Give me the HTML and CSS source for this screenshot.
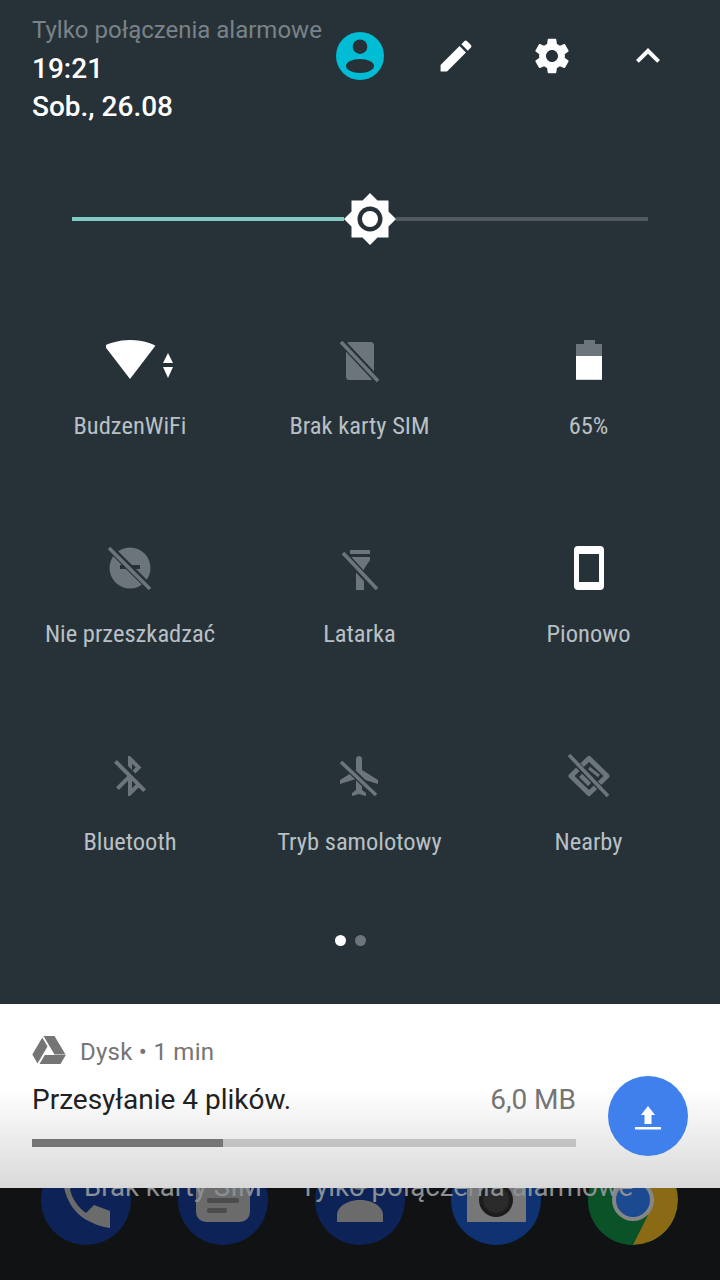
FILE: index.html
```html
<!DOCTYPE html>
<html lang="pl">
<head>
<meta charset="utf-8">
<title>Szybkie ustawienia</title>
<link rel="stylesheet" href="styles.css">
</head>
<body>
<div class="screen">
  <section class="shade">
    <header class="head">
      <div class="status">
        <div class="carrier">Tylko połączenia alarmowe</div>
        <div class="clock">19:21</div>
        <div class="date">Sob., 26.08</div>
      </div>
      <div class="actions">
        <svg class="act" viewBox="0 0 48 48"><circle cx="24" cy="24" r="24" fill="#00bcd4"/><circle cx="24" cy="14.700" r="7.300" fill="#263238"/><ellipse cx="24" cy="34" rx="14" ry="7" fill="#263238"/></svg>
        <svg class="act" viewBox="-2 -2 28 28"><path fill="#fff" d="M3 17.250V21h3.750L17.810 9.940l-3.750-3.750L3 17.250zM20.710 7.040a1 1 0 0 0 0-1.410l-2.340-2.340a1 1 0 0 0-1.410 0l-1.830 1.830 3.750 3.750 1.830-1.830z"/></svg>
        <svg class="act" viewBox="-2 -2 28 28"><path fill="#fff" d="M19.430 12.980c.04-.32.070-.64.070-.98s-.03-.66-.07-.98l2.110-1.650c.19-.15.240-.42.120-.64l-2-3.460c-.12-.22-.39-.3-.61-.22l-2.490 1c-.52-.4-1.080-.73-1.690-.98l-.38-2.650A.488.488 0 0 0 14 2h-4c-.25 0-.46.18-.49.42l-.38 2.650c-.61.25-1.170.59-1.690.98l-2.490-1c-.23-.09-.49 0-.61.22l-2 3.460c-.13.220-.07.490.12.640l2.110 1.650c-.04.320-.07.650-.07.980s.03.660.07.980l-2.110 1.650c-.19.150-.24.420-.12.640l2 3.460c.12.220.39.300.61.220l2.490-1c.52.400 1.080.730 1.690.980l.38 2.650c.03.240.24.420.49.420h4c.25 0 .46-.18.49-.42l.38-2.650c.61-.25 1.170-.59 1.690-.98l2.490 1c.23.090.49 0 .61-.22l2-3.460c.12-.22.07-.49-.12-.64l-2.110-1.650zM12 15.500c-1.930 0-3.500-1.570-3.500-3.500s1.570-3.500 3.500-3.500 3.500 1.570 3.500 3.500-1.570 3.500-3.500 3.500z"/></svg>
        <svg class="act" viewBox="0 0 24 24"><path fill="#fff" d="M12 8l-6 6 1.410 1.410L12 10.830l4.590 4.580L18 14z"/></svg>
      </div>
    </header>

    <div class="slider">
      <div class="slider-on"></div>
      <svg class="thumb" viewBox="0 0 52 52"><path fill="#fff" d="M26 0l7.500 7.500H44.500V18.500L52 26l-7.500 7.500V44.500H33.500L26 52l-7.500-7.500H7.500V33.500L0 26l7.500-7.500V7.500H18.500z"/><circle cx="26" cy="26" r="12.500" fill="#263238"/><circle cx="26" cy="26" r="8" fill="#fff"/></svg>
      <div class="slider-off"></div>
    </div>

    <div class="tiles">
      <div class="tile">
        <div class="glyph">
          <svg class="ic wide" viewBox="0 0 72 48"><path fill="#fff" d="M11 43L-14.400 9.800C-13.400 9 -3 4 11 4S35.400 9 36.400 9.800z" transform="translate(13 0)"/><path fill="#fff" d="M62 17l5 10H57zM57 31h10l-5 11z"/></svg>
        </div>
        <div class="label">BudzenWiFi</div>
      </div>
      <div class="tile">
        <div class="glyph">
          <svg class="ic" viewBox="0 0 48 48"><rect x="10" y="6" width="28" height="38" rx="3.500" fill="#6c757b"/><path d="M2 2L44 47" stroke="#263238" stroke-width="7" fill="none"/><path d="M5 6L42 45" stroke="#6c757b" stroke-width="3.600" fill="none"/></svg>
        </div>
        <div class="label">Brak karty SIM</div>
      </div>
      <div class="tile">
        <div class="glyph">
          <svg class="ic" viewBox="0 0 48 48"><path fill="#6c757b" d="M19 4h11v4h7v12H11V8h8z"/><path fill="#fff" d="M11 20h26v23H11z"/><path fill="#d5d8da" d="M11 43h26v1H11z"/></svg>
        </div>
        <div class="label">65%</div>
      </div>

      <div class="tile">
        <div class="glyph">
          <svg class="ic" viewBox="0 0 48 48"><circle cx="24" cy="24" r="20.500" fill="#6c757b"/><path fill="#263238" d="M14 21h20v4H14z"/><path d="M2 2L46 46" stroke="#263238" stroke-width="7" fill="none"/><path d="M3 4L44 45" stroke="#6c757b" stroke-width="3.600" fill="none"/></svg>
        </div>
        <div class="label">Nie przeszkadzać</div>
      </div>
      <div class="tile">
        <div class="glyph">
          <svg class="ic" viewBox="0 0 48 48"><path fill="#6c757b" d="M14 6h20v4H14zM14 13h20v3l-6 9v21h-8V25l-6-9z"/><path d="M4 6L42 47" stroke="#263238" stroke-width="7" fill="none"/><path d="M7 9L41 45" stroke="#6c757b" stroke-width="3.600" fill="none"/></svg>
        </div>
        <div class="label">Latarka</div>
      </div>
      <div class="tile">
        <div class="glyph">
          <svg class="ic" viewBox="0 0 48 48"><path fill="#fff" fill-rule="evenodd" d="M13 2h22a4 4 0 0 1 4 4v36a4 4 0 0 1-4 4H13a4 4 0 0 1-4-4V6a4 4 0 0 1 4-4zM14 10v28h20V10z"/></svg>
        </div>
        <div class="label">Pionowo</div>
      </div>

      <div class="tile">
        <div class="glyph">
          <svg class="ic" viewBox="0 0 24 24"><path fill="#6c757b" d="M13 5.830l1.880 1.880-1.600 1.600 1.410 1.410 3.020-3.020L12 2h-1v5.030l2 2v-3.200zM5.410 4L4 5.410 10.590 12 5 17.590 6.410 19 11 14.410V22h1l4.290-4.290 2.300 2.290L20 18.590 5.410 4zM13 18.170v-3.760l1.880 1.880L13 18.170z"/></svg>
        </div>
        <div class="label">Bluetooth</div>
      </div>
      <div class="tile">
        <div class="glyph">
          <svg class="ic" viewBox="0 0 24 24"><path fill="#6c757b" d="M21 16v-2l-8-5V3.500c0-.83-.67-1.500-1.500-1.500S10 2.670 10 3.500V9l-8 5v2l8-2.500V19l-2 1.500V22l3.500-1 3.500 1v-1.500L13 19v-5.500l8 2.500z"/><path d="M1.500 3.500L21.500 23" stroke="#263238" stroke-width="3.400" fill="none"/><path d="M2.500 5L20 21.500" stroke="#6c757b" stroke-width="1.800" fill="none"/></svg>
        </div>
        <div class="label">Tryb samolotowy</div>
      </div>
      <div class="tile">
        <div class="glyph">
          <svg class="ic" viewBox="0 0 48 48"><path d="M24 6.500L42 24 24 41.500 6 24z" fill="none" stroke="#6c757b" stroke-width="5" stroke-linejoin="round"/><path fill="#6c757b" d="M20 19l9 9-6 6-9-9z"/><path d="M24 16L34 24" stroke="#6c757b" stroke-width="3" fill="none"/><path d="M2 2L45 46" stroke="#263238" stroke-width="6" fill="none"/><path d="M4 3L43 44" stroke="#6c757b" stroke-width="3.600" fill="none"/></svg>
        </div>
        <div class="label">Nearby</div>
      </div>
    </div>

    <div class="pager">
      <span class="dot on"></span>
      <span class="dot"></span>
    </div>
  </section>

  <section class="notif">
    <div class="notif-main">
      <div class="notif-head">
        <svg class="drive" viewBox="0 0 34 28"><path fill="#757575" d="M11.500 0h11l11 18.500h-11zM10.300 1.500L15.500 10.500 5.500 27.500 .3 18.500zM7.500 28l5.300-9h21l-5.300 9z"/></svg>
        <span class="notif-app">Dysk • 1 min</span>
      </div>
      <div class="notif-row">
        <span class="notif-title">Przesyłanie 4 plików.</span>
        <span class="notif-size">6,0 MB</span>
      </div>
      <div class="bar"><div class="bar-fill"></div></div>
    </div>
    <div class="fab">
      <svg class="fab-ic" viewBox="0 0 48 48"><path fill="#fff" d="M20.500 32V23H17l7-9 7 9h-3.500v9zM11 35h26v2.500H11z"/></svg>
    </div>
  </section>

  <section class="home">
    <div class="ghost">
      <span>Brak karty SIM</span>
      <span>Tylko połączenia alarmowe</span>
    </div>
    <div class="dock">
      <div class="app blue">
        <svg class="app-ic" viewBox="0 0 90 90"><path fill="#6b6b6b" d="M23 8C19 28 25 50 41 62 49 68 61 72 69 73V56L53 50 45 58C37 52 31 44 29 34L37 26 31 8z"/></svg>
      </div>
      <div class="app blue">
        <svg class="app-ic" viewBox="0 0 90 90"><rect x="18" y="0" width="54" height="67" rx="10" fill="#6b6b6b"/><rect x="29" y="43" width="32" height="5" rx="2" fill="#4c4c4c"/><rect x="29" y="53" width="20" height="5" rx="2" fill="#4c4c4c"/></svg>
      </div>
      <div class="app blue">
        <svg class="app-ic" viewBox="0 0 90 90"><path fill="#6b6b6b" d="M22 67V60C22 52 32 45 45 45S68 52 68 60V67z"/><circle cx="45" cy="20" r="15" fill="#6b6b6b"/></svg>
      </div>
      <div class="app lens">
        <svg class="app-ic" viewBox="0 0 90 90"><rect x="16" y="8" width="59" height="59" fill="#777"/><circle cx="45" cy="45" r="17" fill="#1c1c1c"/><circle cx="45" cy="45" r="13" fill="#2a2a2a"/></svg>
      </div>
      <div class="app chrome">
        <svg class="app-ic" viewBox="0 0 90 90"><path fill="#8a6a14" d="M45 0a45 45 0 0 1 0 90L60 60z"/><path fill="#0a5227" d="M0 45A45 45 0 0 1 12 15L40 60 45 90A45 45 0 0 1 0 45z"/><path fill="#7d140f" d="M28 16h10L30 42z"/><circle cx="45" cy="45" r="21" fill="#868686"/><circle cx="45" cy="45" r="17" fill="#1c4a90"/></svg>
      </div>
    </div>
  </section>
</div>
</body>
</html>
```

FILE: styles.css
```css
* { box-sizing: border-box; }
html, body { margin: 0; padding: 0; }
body { width: 720px; height: 1280px; overflow: hidden; font-family: Roboto, "Noto Sans", sans-serif; }
.screen { width: 720px; height: 1280px; display: flex; flex-direction: column; }

.shade { height: 1004px; background: #263238; flex: none; display: flex; flex-direction: column; }

.head { display: flex; justify-content: space-between; height: 124px; padding: 14px 48px 0 32px; }
.status { display: flex; flex-direction: column; }
.carrier { font-size: 24px; line-height: 32px; color: #7b8287; margin-bottom: 4px; }
.clock { font-size: 28px; line-height: 38px; color: #fff; font-weight: 500; }
.date { font-size: 28px; line-height: 38px; color: #fff; font-weight: 500; }
.actions { display: flex; gap: 48px; padding-top: 18px; }
.act { width: 48px; height: 48px; display: block; }

.slider { display: flex; align-items: center; margin: 69px 72px 0; height: 52px; }
.slider-on { width: 272px; height: 4px; background: #80cbc4; }
.thumb { width: 52px; height: 52px; flex: none; }
.slider-off { flex: 1; height: 4px; background: #515a60; }

.tiles { display: grid; grid-template-columns: 230px 229px 229px; margin: 0 16px 0 15px; grid-auto-rows: 208px; padding-top: 91px; }
.tile { display: flex; flex-direction: column; align-items: center; }
.glyph { height: 48px; display: flex; justify-content: center; align-items: center; }
.ic { width: 48px; height: 48px; display: block; }
.ic.wide { width: 72px; margin-left: 24px; }
.label { margin-top: 27px; font-size: 24.500px; line-height: 30px; color: #b9c0c5; white-space: nowrap; font-stretch: 75%; }

.pager { display: flex; justify-content: center; gap: 9px; margin-top: -25px; padding-right: 20px; }
.dot { width: 11px; height: 11px; border-radius: 50%; background: #6c757b; }
.dot.on { background: #fff; }

.notif { position: relative; z-index: 2; height: 184px; flex: none; display: flex; padding: 32px 32px 0; background: linear-gradient(#fff 0, #fff 46%, #d9d9d9 100%); }
.notif-main { width: 544px; }
.notif-head { display: flex; align-items: center; height: 28px; gap: 14px; }
.drive { width: 34px; height: 28px; flex: none; }
.notif-app { font-size: 24px; color: #757575; line-height: 32px; letter-spacing: .25px; position: relative; top: 2px; }
.notif-row { display: flex; justify-content: space-between; margin-top: 17px; line-height: 38px; font-size: 28px; }
.notif-title { color: #212121; }
.notif-size { color: #757575; }
.bar { height: 8px; margin-top: 20px; background: #c2c2c2; }
.bar-fill { width: 35.100%; height: 8px; background: #757575; }
.fab { width: 80px; height: 80px; border-radius: 50%; background: #3f80ec; margin: 40px 0 0 32px; display: flex; align-items: center; justify-content: center; flex: none; }
.fab-ic { width: 48px; height: 48px; }

.home { flex: 1; background: #111214; position: relative; overflow: hidden; }
.ghost { position: absolute; z-index: 1; top: -19px; left: 84px; display: flex; gap: 38px; font-size: 27.600px; line-height: 36px; color: #8a9095; white-space: nowrap; }
.dock { display: flex; justify-content: space-between; padding: 0 42px 0 41px; margin-top: -33px; }
.app { width: 90px; height: 90px; border-radius: 50%; overflow: hidden; }
.blue { background: #0d2358; }
.lens { background: #0e3272; }
.chrome { background: #0a5227; }
.app-ic { width: 90px; height: 90px; display: block; }
```
